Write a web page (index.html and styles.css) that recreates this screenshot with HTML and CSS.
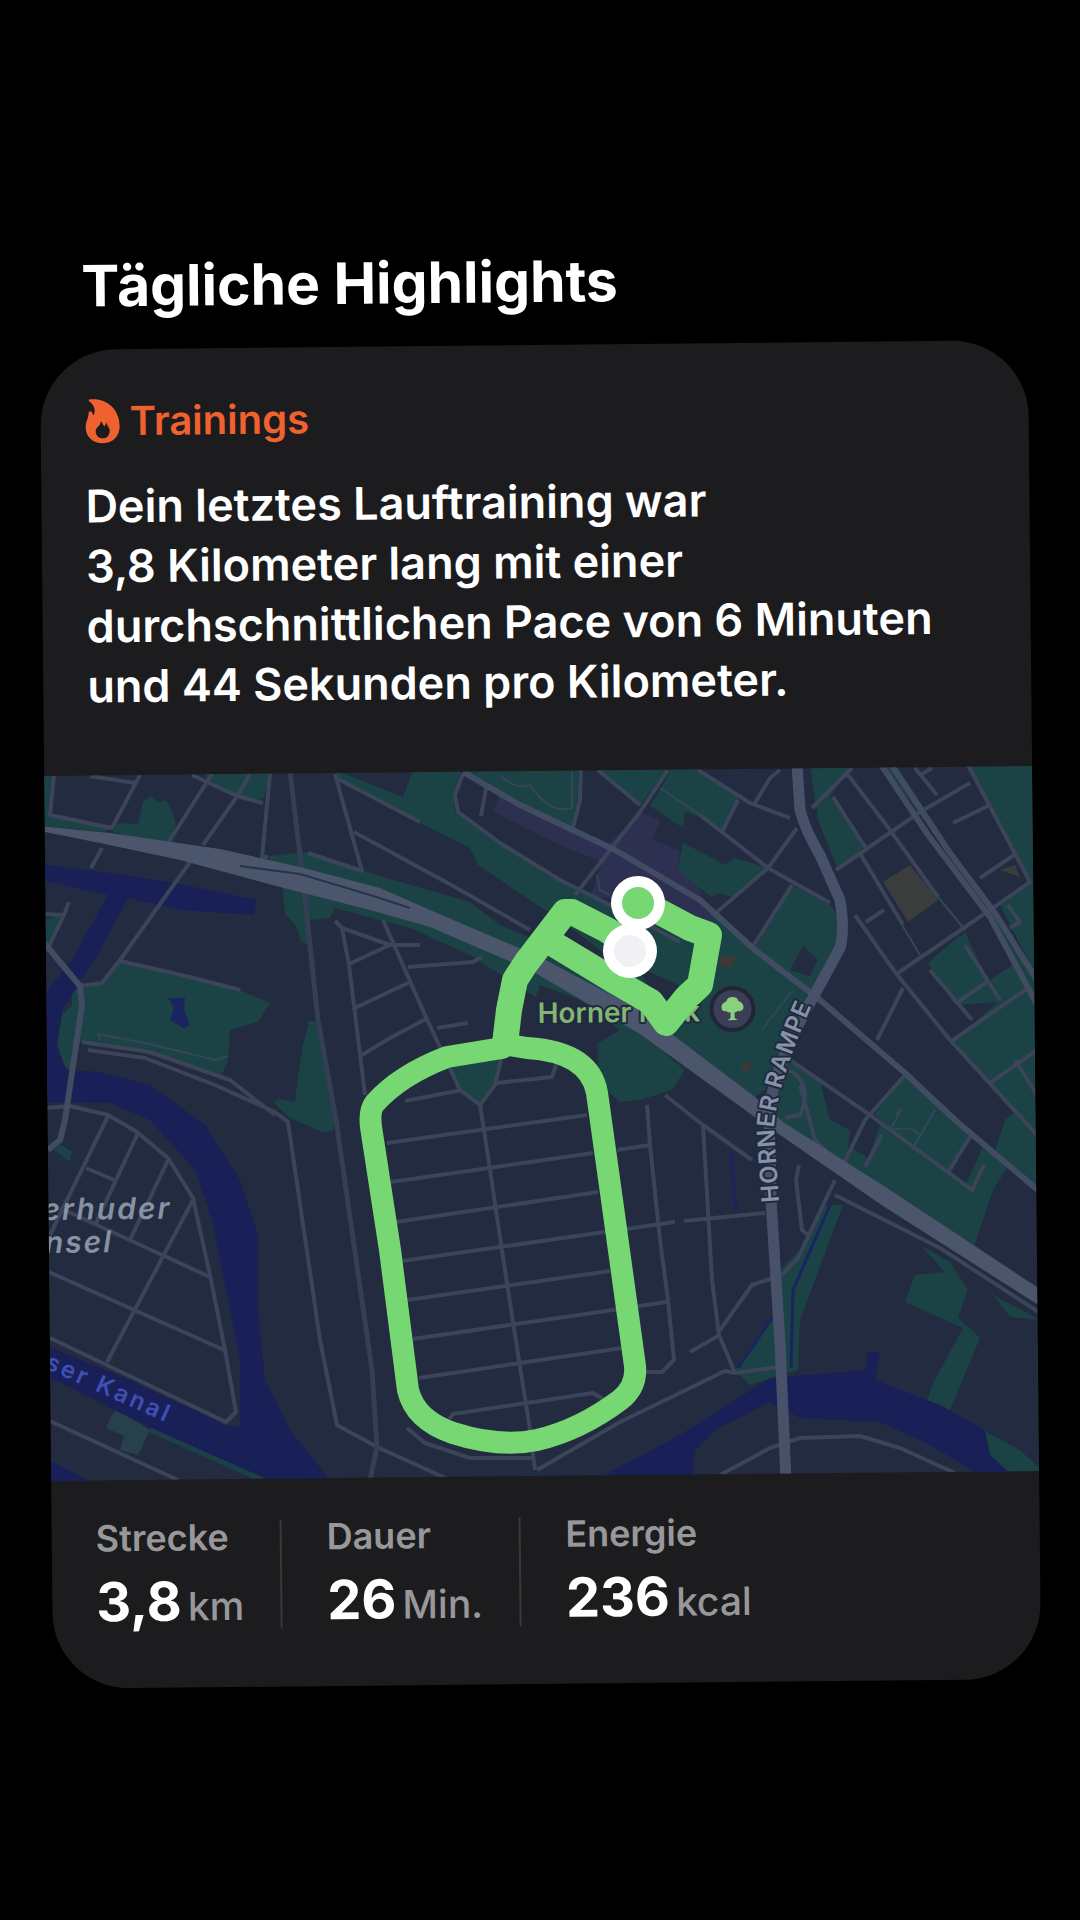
FILE: index.html
```
<!DOCTYPE html>
<html lang="de">
<head>
    <meta charset="UTF-8">
    <meta name="viewport" content="width=device-width, initial-scale=1.0">
    <title>Tägliche Highlights</title>
    <link rel="stylesheet" href="styles.css">
</head>
<body>

    <main class="highlights">
        <h1>Tägliche Highlights</h1>

        <article class="card">
            <header class="intro">
                <h2 class="category">
                    <svg class="flame" viewBox="0 0 36 46" aria-hidden="true">
                        <path fill-rule="evenodd" d="M5 1C20-1 35 9 35 28C35 38 28 45 18 45C8 45 1 38 1 29C1 23 4 20 4 15C4 12 7 12 8 15L9 17C12 11 9 6 5 3C4 2 4 1 5 1ZM16 23C16 28 11 28 11 33C11 37 14 40 18 40C22 40 25 37 25 32C25 29 22 28 22 24L20 28C18 27 18 24 16 23Z"/>
                    </svg>
                    Trainings
                </h2>
                <p class="summary">Dein letztes Lauftraining war<br>3,8 Kilometer lang mit einer<br>durchschnittlichen Pace von 6 Minuten<br>und 44 Sekunden pro Kilometer.</p>
            </header>

            <!-- Karte mit Laufstrecke -->
            <svg class="map" viewBox="46 771 988 705" role="img" aria-label="Karte der Laufstrecke">
                <g transform="rotate(0.57 540 960)">
                    <!-- Parks -->
                    <g class="park">
                        <path d="M40 770H54L50 815L112 828L105 832L40 826Z"/>
                        <path d="M118 823L138 824L143 802L150 796L158 802L166 800L174 815L176 825L166 845L112 832Z"/>
                        <path d="M205 772H270L264 798L250 800L232 794L207 784Z"/>
                        <path d="M268 856L308 852L380 876L470 902L500 925L560 950L640 1010L700 1060L600 1040L540 1000L470 955L410 928L335 908L330 918L310 920L307 944L301 942L296 926L285 914L282 884Z"/>
                        <path d="M40 920L64 915L48 948H40Z"/>
                        <path d="M120 960L240 990L270 1003L258 1022L230 1030L228 1060L222 1074L130 1050L80 1042L70 1070L60 1062L57 1045L62 1015L72 1005L72 990L100 983Z"/>
                        <path d="M309 1021H318L335 1120L333 1131L322 1132L290 1118L274 1103L278 1099L295 1102L298 1075L303 1045Z"/>
                        <path d="M335 770L403 797L413 770H462L453 795L455 812L500 845L560 880L620 908L700 900L755 948L808 993L790 1040L765 1090L750 1100L640 1020L600 950L560 920L515 890L478 865L470 848L420 823L338 779Z"/>
                        <path d="M465 770H583L572 828L540 815L500 794Z"/>
                        <path d="M595 768H668L640 806Z"/>
                        <path d="M672 768H700L738 798L722 832L702 818L685 812L683 828L650 806L660 790Z"/>
                        <path d="M683 843L697 850L725 865L735 858L768 868L733 898L720 893L712 897L677 873Z"/>
                        <path d="M810 765H852L830 797L866 845L838 870L818 820Z"/>
                        <path d="M793 885L830 905L838 915L836 945L820 980L808 993L755 948Z"/>
                        <path d="M968 765H1040V892L1028 882Z"/>
                        <path d="M884 765H896L1036 980V1000L990 912Z"/>
                        <path d="M1030 883L1000 905L1036 975V880Z"/>
                        <path d="M928 963L960 935L990 980L1012 965L1036 985L1000 1002L955 1005Z"/>
                        <path d="M930 970L965 932L988 980L958 1003Z"/>
                        <path d="M953 1042L1000 1000L1040 985V1135L1015 1112Z"/>
                        <path d="M775 1075L790 1060L820 1080L830 1120L850 1130L848 1150L862 1130L905 1075L955 1118L1007 1168L993 1190L973 1250L840 1165L770 1118Z"/>
                        <path d="M1005 1120L1015 1112L1040 1135V1192L995 1150Z"/>
                        <path d="M920 1245L950 1262L968 1290L958 1318L972 1330L980 1338L950 1410L927 1402L932 1385L963 1328L905 1302L915 1275L945 1272Z"/>
                        <path d="M993 1295L1040 1320L1010 1317Z"/>
                        <path d="M983 1430L1020 1450L1040 1468V1475H1010L990 1455Z"/>
                        <path d="M825 1205H843L800 1320L798 1370L750 1385L735 1370L775 1315L782 1268L800 1250Z"/>
                        <path d="M597 1043L615 1030L640 1033L685 1070L672 1090L640 1100L620 1102L600 1085Z"/>
                        <path d="M447 1062L502 1055L495 1085L480 1105L466 1097Z"/>
                        <path d="M54 1150L60 1144L72 1152L70 1162Z"/>
                        <path class="dim" d="M112 1415L118 1408L150 1430L138 1455L120 1450L124 1436L106 1428Z"/>
                    </g>
                    <!-- Gebäudeblöcke im Park -->
                    <g class="block">
                        <path d="M790 970L803 946L818 960L810 976Z"/>
                        <path d="M565 938L600 950L618 970L606 975Z"/>
                        <path d="M635 965L678 985L682 1000L666 1020L655 995Z"/>
                        <path d="M540 985L580 1000L620 1030L595 1045L550 1040L528 1020Z"/>
                        <path d="M866 1110L882 1120L868 1158L850 1147Z"/>
                        <path d="M970 1137L984 1145L966 1183L952 1172Z"/>
                    </g>
                    <path class="campus" d="M500 795L608 845L640 812L660 820L652 840L680 850L678 870L700 890L715 925L660 898L590 898L602 862L560 845L493 812Z"/>
                    <path class="school" d="M883 882L910 865L938 900L908 922Z"/>
                    <path class="school" d="M1000 870L1015 865L1020 877Z"/>
                    <path class="pitch" d="M718 965L722 955L736 958L732 968ZM740 1066L748 1060L752 1066L745 1073Z"/>

                    <!-- Wasser -->
                    <g class="water">
                        <path d="M40 864L110 873L170 882L256 900L254 915L180 910L128 898L100 950L75 990L62 1010L57 1045L66 1070L100 1072L150 1085L205 1125L240 1180L258 1235L258 1310L265 1380L290 1430L330 1480H270L150 1428L45 1375V1345L130 1380L225 1425L240 1427L240 1360L226 1290L212 1220L195 1170L150 1120L110 1103L40 1102V1000L72 960L108 895L40 880Z"/>
                        <path d="M45 1458L92 1482H45Z"/>
                        <path d="M595 1480L680 1435L770 1378L865 1370L868 1352H880L875 1380L940 1405L985 1430L990 1455L1012 1475H980L930 1445L880 1422L800 1418L770 1402L715 1430L695 1450L692 1480Z"/>
                    </g>
                    <path class="pond" d="M168 998L185 998L184 1010L190 1025L183 1028L170 1020L174 1008Z"/>
                    <path class="ditch" d="M830 1205L793 1290L791 1368M772 1318L738 1368M731 1152L736 1210"/>
                    <path class="shore" d="M150 1430L262 1480"/>

                    <!-- Nebenstraßen -->
                    <g class="road">
                        <path d="M54 775L50 815L112 828L140 775M90 776L135 783"/>
                        <path d="M192 775L237 796L263 803M212 774L168 843M250 774L238 795L203 845M270 774L262 857L268 857"/>
                        <path d="M335 774L362 871L308 853M338 779L420 822M354 832L455 887L530 930"/>
                        <path d="M102 848L91 868M190 862L120 960L102 983L80 986M120 961L190 977L240 990"/>
                        <path d="M42 914L64 915L69 902M64 915L48 948"/>
                        <path d="M82 1042L150 1052L230 1080L275 1115M88 1050L145 1058L215 1085L275 1112L288 1122L320 1340L337 1425L377 1447L450 1480"/>
                        <path d="M45 1108L70 1106L108 1115L137 1132L168 1158L193 1198L210 1275L225 1350L236 1412L226 1422L50 1338"/>
                        <path d="M108 1116L50 1235M138 1133L95 1225M168 1160L130 1240M193 1200L107 1362M86 1168L114 1180M60 1208L210 1277M49 1272L224 1350M50 1421L178 1480"/>
                        <path d="M335 921L342 928L349 965L365 1095M342 928L390 945H420M349 964L390 945M383 920L425 1015L460 1090L480 1105L495 1085L502 1055M355 1008L410 982M362 1055L390 1038L428 1018M408 967L473 962L482 957M437 1028L468 1023M405 1101L462 1090M497 1083L552 1077L556 1065"/>
                        <path d="M480 1105L484 1130L508 1290L530 1430L535 1470"/>
                        <path d="M387 1143L587 1115M391 1182L593 1153M396 1222L598 1192M402 1261L675 1222M407 1300L610 1271M413 1339L667 1302M419 1378L622 1348M447 1422L453 1414L593 1393L605 1400"/>
                        <path d="M617 1150L650 1145M647 1105L650 1145L660 1240L668 1300L674 1360L662 1372H645M684 1221L765 1213M703 1125L712 1280L719 1335L735 1373L778 1367M690 1352L718 1336M720 1330L752 1285L782 1275L798 1258L835 1180"/>
                        <path d="M537 1470L620 1422L725 1371L735 1373M407 1428L425 1443L470 1458H533M720 1475L770 1448L800 1438L860 1436L900 1448L955 1473M799 1165L796 1180L802 1230L808 1235M665 1095L703 1125L752 1160"/>
                        <path d="M463 774L455 795L458 812L500 843L560 880L620 910L680 942M486 788L481 816M581 770L580 800L573 828"/>
                        <path d="M598 770L640 805M668 770L640 812L575 895M698 770L750 803L790 818M780 770L770 778L755 803M738 800L722 832M700 815L722 832L768 868L830 903M797 828L768 868L716 913M792 885L752 948"/>
                        <path d="M852 768L812 808M833 797L867 850M848 775L890 830L938 897M836 870L920 812L970 783M915 768L937 795M922 774L932 768M968 765L1030 882L990 910L895 975M953 823L988 806M980 878L1014 855M861 855L903 925M855 915L895 972L950 1040L1037 1135M866 922L884 910M903 988L877 1040M930 970L972 1020M958 1002L987 982M965 945L1000 1000M950 1042L1028 988M990 1083L1037 1050M1015 1060L1037 1095M1008 905L1020 922L1010 928"/>
                        <path d="M905 1075L865 1120L843 1165M790 1060L870 1115L972 1190L984 1165M970 1137L948 1172M882 1135L865 1167M784 1068Q815 1080 800 1115L785 1118M800 1085L815 1140L840 1165M835 1195L940 1248L1040 1313"/>
                    </g>
                    <path class="path" d="M500 775Q515 790 530 785Q550 815 572 808L572 772M660 788L700 815M100 1040L98 1034L150 1044L215 1060L228 1056M793 990L762 1030M902 925L920 955M938 897L965 930M896 1115Q905 1105 900 1112L890 1130Q915 1125 918 1135M935 1110L912 1150M597 875L600 890L610 895"/>
                    <path class="rail" d="M290 772L303 880L318 1020L336 1120L372 1370L377 1447L370 1480"/>
                    <path class="road wide" d="M463 772L520 805L615 850L700 900L755 950L820 1000L905 1073L955 1120L1040 1192"/>
                    <path class="road wide" d="M45 944L80 986L82 1005L65 1120L60 1140L48 1150"/>
                    <path class="road wide" d="M882 766L928 835L990 917L1040 1010M892 766L950 853L995 913L1040 985"/>

                    <!-- Hauptstraßen -->
                    <path class="main-road" d="M797 765L800 810Q805 830 820 855L840 900Q845 930 840 948L810 1003Q775 1065 769 1110L771 1200L780 1343L786 1480"/>
                    <path class="highway-fill" d="M40 826L110 833L220 849L300 867L380 888L430 910L540 957L640 1010L755 1097L783 1122L887 1188L1040 1289V1306L883 1206L770 1128L640 1034L530 970L430 927L370 910L280 887L180 860L100 843L40 831Z"/>
                    <path class="median" d="M240 866L300 874L370 895L410 908"/>

                    <!-- Beschriftung unter der Strecke -->
                    <path id="rampe" d="M779 1202L774 1130Q776 1080 825 976" fill="none"/>
                    <text class="label street"><textPath href="#rampe">HORNER RAMPE</textPath></text>
                    <text class="label canal" transform="translate(44 1368) rotate(24)">ser Kanal</text>
                </g>
                <text class="label place" x="40" y="1215">erhuder</text>
                <text class="label place" x="42" y="1248">nsel</text>
                <text class="label poi" x="537" y="1023">Horner Park</text>

                <!-- Park-Symbol -->
                <circle class="poi-badge" cx="732" cy="1011" r="21"/>
                <path class="poi-tree" d="M732 999Q737 999 738 1003Q743 1005 743 1009Q743 1014 737 1013Q735 1015 734 1014V1020L737 1022H727L730 1020V1014Q728 1015 726 1013Q721 1014 721 1009Q721 1005 726 1003Q727 999 732 999Z"/>

                <!-- Laufstrecke -->
                <g transform="rotate(0.57 540 960)">
                    <path class="route double" d="M638 903L660 912L690 928L709 935L700 985L687 997L666 1023L651 1002L613 980L547 940M630 945L607 930L572 912L565 912L526 963L515 980L509 1010L505 1044"/>
                    <path class="route" d="M502 1048L447 1057Q400 1075 375 1103Q369 1110 371 1127L390 1250L408 1390Q415 1420 453 1433Q500 1448 537 1440Q580 1430 620 1400Q637 1387 635 1366L612 1200L597 1093Q590 1052 527 1048L502 1044"/>
                    <circle class="pin" cx="630" cy="951" r="27"/>
                    <circle class="pin-end" cx="630" cy="951" r="16"/>
                    <circle class="pin" cx="638" cy="903" r="27"/>
                    <circle class="pin-start" cx="638" cy="903" r="16"/>
                </g>
            </svg>

            <dl class="stats">
                <div class="stat">
                    <dt>Strecke</dt>
                    <dd>3,8 <span>km</span></dd>
                </div>
                <div class="stat">
                    <dt>Dauer</dt>
                    <dd>26 <span>Min.</span></dd>
                </div>
                <div class="stat">
                    <dt>Energie</dt>
                    <dd>236 <span>kcal</span></dd>
                </div>
            </dl>
        </article>
    </main>

</body>
</html>
```
FILE: styles.css
```
* {
    box-sizing: border-box;
}

body {
    margin: 0;
    min-height: 100vh;
    background-color: #000;
    color: #fff;
    font-family: Inter, "Liberation Sans", sans-serif;
    overflow-x: hidden;
}

/* Ganze Ansicht leicht gekippt */
.highlights {
    padding: 248px 46px 236px;
    transform: rotate(-0.57deg);
}

h1, h2, p, dl, dd {
    margin: 0;
}

h1 {
    padding-left: 42px;
    margin-bottom: 29px;
    font-size: 57px;
    line-height: 68px;
    font-weight: 700;
}

/* Karte */
.card {
    background-color: #1c1c1e;
    border-radius: 76px;
    overflow: hidden;
}

.intro {
    padding: 48px 44px 59px;
}

.category {
    display: flex;
    align-items: center;
    gap: 9px;
    margin-bottom: 31px;
    color: #ef6230;
    font-size: 40px;
    line-height: 48px;
    font-weight: 600;
}

.flame {
    width: 36px;
    height: 46px;
    fill: #ef6230;
}

.summary {
    font-size: 45px;
    line-height: 60px;
    font-weight: 600;
}

/* Landkarte */
.map {
    display: block;
    width: 100%;
    height: auto;
    background-color: #222b3f;
}

.park {
    fill: #1b4244;
}
.park .dim {
    fill: #27414a;
}
.block {
    fill: #222b3f;
}
.campus {
    fill: #2d3051;
}
.school {
    fill: #3a3d3b;
}
.pitch {
    fill: #3c3938;
}
.water {
    fill: #192057;
}
.pond {
    fill: #1a2560;
}
.ditch {
    fill: none;
    stroke: #1a2460;
    stroke-width: 3;
}
.shore {
    fill: none;
    stroke: #1b4048;
    stroke-width: 5;
}

.road {
    fill: none;
    stroke: #3b4459;
    stroke-width: 4;
    stroke-linejoin: round;
}
.road.wide {
    stroke: #414b61;
    stroke-width: 6;
}
.path {
    fill: none;
    stroke: #34465a;
    stroke-width: 2;
}
.rail {
    fill: none;
    stroke: #343e55;
    stroke-width: 5;
}
.main-road {
    fill: none;
    stroke: #47526a;
    stroke-width: 11;
}
.highway-fill {
    fill: #4b566d;
}
.median {
    fill: none;
    stroke: #28344a;
    stroke-width: 2;
}

.label {
    font-weight: 600;
    paint-order: stroke;
    stroke: #202a3d;
    stroke-width: 4;
    stroke-linejoin: round;
}
.street {
    fill: #8792a8;
    font-size: 24px;
    letter-spacing: 1px;
}
.canal {
    fill: #3f4fb6;
    stroke: none;
    font-size: 24px;
    letter-spacing: 3px;
}
.place {
    fill: #8792a2;
    stroke: none;
    font-size: 30px;
    font-style: italic;
    letter-spacing: 2px;
}
.poi {
    fill: #84b472;
    font-size: 28px;
}
.poi-badge {
    fill: #3c3d57;
    stroke: #202637;
    stroke-width: 4;
}
.poi-tree {
    fill: #8bd07d;
}

.route {
    fill: none;
    stroke: #76d773;
    stroke-width: 22;
    stroke-linecap: round;
    stroke-linejoin: round;
}
.route.double {
    stroke-width: 26;
}
.pin {
    fill: #fff;
}
.pin-start {
    fill: #76d773;
}
.pin-end {
    fill: #f1f0f5;
}

/* Werte */
.stats {
    display: flex;
    padding: 41px 44px 58px;
}

.stat {
    height: 109px;
    padding-right: 36px;
}
.stat + .stat {
    padding-left: 45px;
    border-left: 2px solid #39393b;
}

dt {
    margin-top: -5px;
    margin-bottom: 10px;
    color: #98989c;
    font-size: 36px;
    line-height: 44px;
    font-weight: 600;
}

dd {
    display: flex;
    align-items: baseline;
    gap: 6px;
    font-size: 54px;
    line-height: 64px;
    font-weight: 700;
    white-space: nowrap;
}

dd span {
    color: #98989c;
    font-size: 39px;
    font-weight: 500;
}
```
